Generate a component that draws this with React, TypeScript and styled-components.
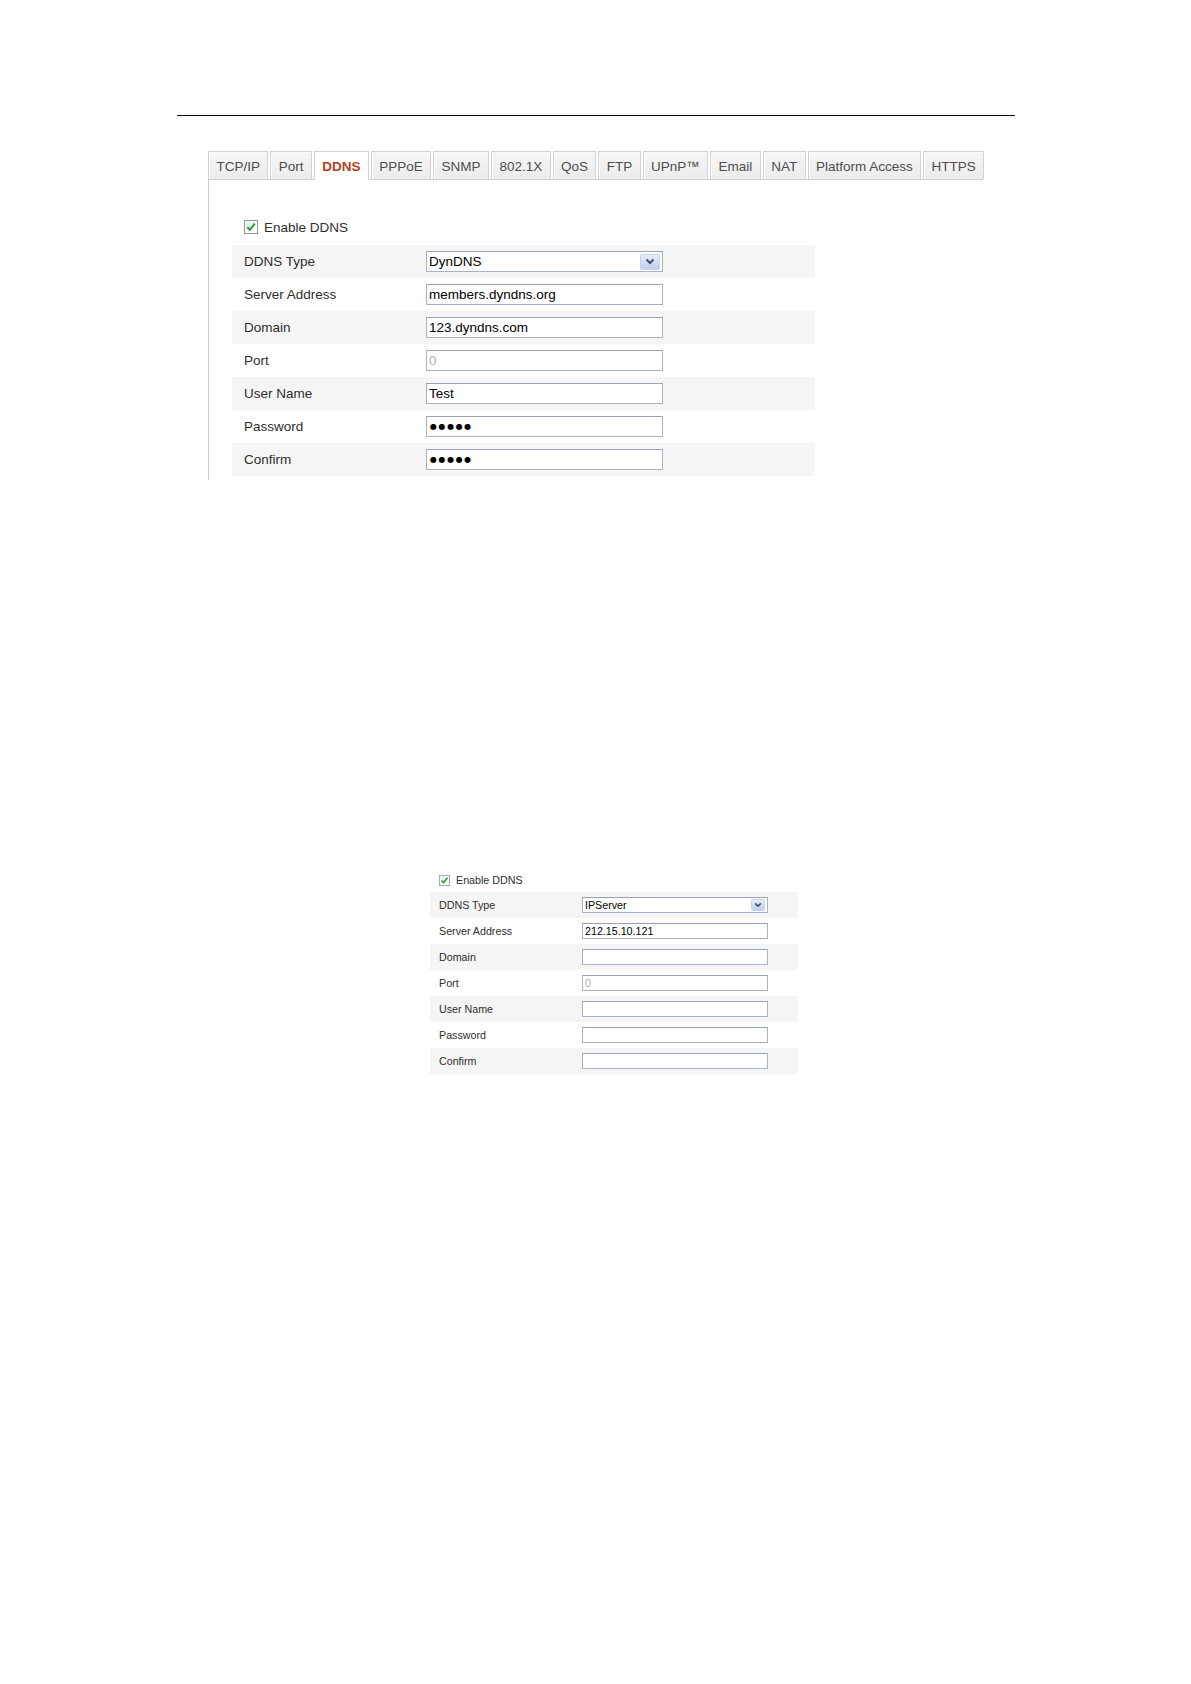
import React from 'react';
import styled, { createGlobalStyle } from 'styled-components';

const GlobalStyle = createGlobalStyle`
  html, body {
    margin: 0;
    padding: 0;
    background: #ffffff;
  }
  body {
    font-family: "Liberation Sans", Arial, sans-serif;
  }
`;

type Size = 'large' | 'small';

const metrics = {
  large: { font: 13.5, row: 33, rowWidth: 583, labelPad: 12, labelCol: 194, inputW: 237, inputH: 21, box: 14, checkGap: 6, checkH: 16, checkLeft: 12, checkBottom: 10, arrowW: 20, arrowH: 16, dot: 8, dotGap: 1.6 },
  small: { font: 10.7, row: 26, rowWidth: 368, labelPad: 9, labelCol: 152, inputW: 186, inputH: 16, box: 11, checkGap: 6, checkH: 12, checkLeft: 9, checkBottom: 6, arrowW: 14, arrowH: 12, dot: 7, dotGap: 1.2 },
};

const Page = styled.div`
  width: 1191px;
  min-height: 1684px;
  box-sizing: border-box;
  padding-top: 115px;
  background: #fff;
`;

const HeaderRule = styled.div`
  margin-left: 177px;
  width: 838px;
  border-top: 1px solid #000;
`;

const TabbedFigure = styled.div`
  margin: 35px 0 0 208px;
  width: 775px;
`;

const TabBar = styled.div`
  display: flex;
  gap: 2px;
  border-bottom: 1px solid #d0d0d0;
`;

const Tab = styled.div<{ $active?: boolean }>`
  box-sizing: border-box;
  height: ${p => (p.$active ? 29 : 28)}px;
  margin-bottom: ${p => (p.$active ? -1 : 0)}px;
  padding: 1px 7.4px 0;
  display: flex;
  align-items: center;
  white-space: nowrap;
  border: 1px solid #d2d2d2;
  border-bottom: ${p => (p.$active ? '1px solid #fff' : 'none')};
  background: ${p => (p.$active ? '#fff' : 'linear-gradient(#f6f6f6, #ececec)')};
  box-shadow: ${p => (p.$active ? 'none' : 'inset 1px 1px 0 #fbfbfb')};
  color: ${p => (p.$active ? '#b4411c' : '#4d4d4d')};
  font-weight: ${p => (p.$active ? 'bold' : 'normal')};
  font-size: 13.5px;
`;

const Panel = styled.div`
  border-left: 1px solid #d0d0d0;
  padding: 39px 0 4px 23px;
`;

const PlainFigure = styled.div`
  margin: 394px 0 0 430px;
`;

const CheckRow = styled.div<{ $size: Size }>`
  display: flex;
  align-items: center;
  height: ${p => metrics[p.$size].checkH}px;
  margin: 0 0 ${p => metrics[p.$size].checkBottom}px ${p => metrics[p.$size].checkLeft}px;
  gap: ${p => metrics[p.$size].checkGap}px;
  font-size: ${p => metrics[p.$size].font}px;
  color: #2e2e2e;
`;

const FieldTable = styled.div<{ $size: Size }>`
  display: flex;
  flex-direction: column;
  width: ${p => metrics[p.$size].rowWidth}px;
`;

const FieldRow = styled.div<{ $size: Size; $shaded: boolean }>`
  display: grid;
  grid-template-columns: ${p => metrics[p.$size].labelCol}px ${p => metrics[p.$size].inputW}px;
  align-items: center;
  height: ${p => metrics[p.$size].row}px;
  background: ${p => (p.$shaded ? '#f5f5f5' : '#fff')};
`;

const Label = styled.div<{ $size: Size }>`
  padding-left: ${p => metrics[p.$size].labelPad}px;
  font-size: ${p => metrics[p.$size].font}px;
  color: #2e2e2e;
`;

const InputBox = styled.div<{ $size: Size; $disabled?: boolean }>`
  box-sizing: border-box;
  position: relative;
  height: ${p => metrics[p.$size].inputH}px;
  border: 1px solid #a7b3c4;
  border-top-color: #98a4b6;
  background: #fff;
  padding: 0 2px;
  display: flex;
  align-items: center;
  font-size: ${p => metrics[p.$size].font}px;
  color: ${p => (p.$disabled ? '#b0b0b0' : '#000')};
  white-space: nowrap;
  overflow: hidden;
`;

const Dots = styled.span<{ $size: Size }>`
  font-family: "DejaVu Sans", sans-serif;
  font-size: ${p => metrics[p.$size].dot}px;
  letter-spacing: ${p => metrics[p.$size].dotGap}px;
  color: #000;
  padding-left: 1px;
`;

const ArrowButton = styled.span<{ $size: Size }>`
  position: absolute;
  right: 2px;
  top: 50%;
  transform: translateY(-50%);
  width: ${p => metrics[p.$size].arrowW}px;
  height: ${p => metrics[p.$size].arrowH}px;
  box-sizing: border-box;
  border: 1px solid #c4d2ec;
  border-radius: 2px;
  background: linear-gradient(#e6edfa, #bfcff0);
  display: flex;
  align-items: center;
  justify-content: center;
`;

const CheckBox = ({ size }: { size: Size }) => {
  const s = metrics[size].box;
  return (
    <svg width={s} height={s} viewBox="0 0 14 14">
      <defs>
        <linearGradient id={`cb-${size}`} x1="0" y1="0" x2="1" y2="1">
          <stop offset="0" stopColor="#e4e8ee" />
          <stop offset="1" stopColor="#ffffff" />
        </linearGradient>
      </defs>
      <rect x="0.5" y="0.5" width="13" height="13" fill="#fff" stroke="#8a96a8" />
      <rect x="2" y="2" width="10" height="10" fill={`url(#cb-${size})`} />
      <path d="M3.3 7.1 L5.8 9.8 L10.8 3.6" fill="none" stroke="#2e9b2e" strokeWidth="2" strokeLinejoin="round" />
    </svg>
  );
};

const Chevron = ({ size }: { size: Size }) => (
  <svg width={size === 'large' ? 10 : 8} height={size === 'large' ? 7 : 6} viewBox="0 0 10 7">
    <path d="M1.5 1.5 L5 5 L8.5 1.5" fill="none" stroke="#3c4a6e" strokeWidth="2" />
  </svg>
);

type Field = {
  label: string;
  value?: string;
  select?: boolean;
  disabled?: boolean;
  password?: boolean;
};

const DdnsForm = ({ size, fields }: { size: Size; fields: Field[] }) => (
  <>
    <CheckRow $size={size}>
      <CheckBox size={size} />
      <span>Enable DDNS</span>
    </CheckRow>
    <FieldTable $size={size}>
      {fields.map((f, i) => (
        <FieldRow key={f.label} $size={size} $shaded={i % 2 === 0}>
          <Label $size={size}>{f.label}</Label>
          <InputBox $size={size} $disabled={f.disabled}>
            {f.password ? <Dots $size={size}>{f.value}</Dots> : f.value}
            {f.select && (
              <ArrowButton $size={size}>
                <Chevron size={size} />
              </ArrowButton>
            )}
          </InputBox>
        </FieldRow>
      ))}
    </FieldTable>
  </>
);

const tabs = ['TCP/IP', 'Port', 'DDNS', 'PPPoE', 'SNMP', '802.1X', 'QoS', 'FTP', 'UPnP™', 'Email', 'NAT', 'Platform Access', 'HTTPS'];

const dynFields: Field[] = [
  { label: 'DDNS Type', value: 'DynDNS', select: true },
  { label: 'Server Address', value: 'members.dyndns.org' },
  { label: 'Domain', value: '123.dyndns.com' },
  { label: 'Port', value: '0', disabled: true },
  { label: 'User Name', value: 'Test' },
  { label: 'Password', value: '●●●●●', password: true },
  { label: 'Confirm', value: '●●●●●', password: true },
];

const ipFields: Field[] = [
  { label: 'DDNS Type', value: 'IPServer', select: true },
  { label: 'Server Address', value: '212.15.10.121' },
  { label: 'Domain', value: '' },
  { label: 'Port', value: '0', disabled: true },
  { label: 'User Name', value: '' },
  { label: 'Password', value: '' },
  { label: 'Confirm', value: '' },
];

export default function App() {
  return (
    <Page>
      <GlobalStyle />
      <HeaderRule />
      <TabbedFigure>
        <TabBar>
          {tabs.map(t => (
            <Tab key={t} $active={t === 'DDNS'}>{t}</Tab>
          ))}
        </TabBar>
        <Panel>
          <DdnsForm size="large" fields={dynFields} />
        </Panel>
      </TabbedFigure>
      <PlainFigure>
        <DdnsForm size="small" fields={ipFields} />
      </PlainFigure>
    </Page>
  );
}
